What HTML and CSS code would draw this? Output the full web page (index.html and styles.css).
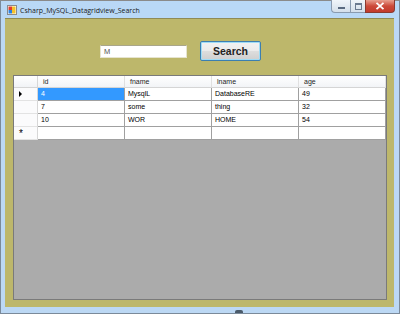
FILE: index.html
```html
<!DOCTYPE html>
<html>
<head>
<meta charset="utf-8">
<link rel="stylesheet" href="styles.css">
</head>
<body>
<div class="window">
  <div class="titlebar">
    <svg class="appicon" width="10" height="10" viewBox="0 0 10 10">
      <rect x="0.5" y="0.5" width="9" height="9" fill="#fff" stroke="#8a8a8a"/>
      <rect x="1.5" y="1.5" width="3.5" height="3.5" fill="#e03b2b"/>
      <rect x="5" y="1.5" width="3.5" height="3.5" fill="#f5c22a"/>
      <rect x="1.5" y="5" width="3.5" height="3.5" fill="#2a7fe0"/>
      <rect x="5" y="5" width="3.5" height="3.5" fill="#f5c22a"/>
    </svg>
    <span class="title">Csharp_MySQL_Datagridview_Search</span>
    <div class="controls">
      <div class="cbtn min"><span class="minglyph"></span></div>
      <div class="cbtn max"><span class="maxglyph"></span></div>
      <div class="cbtn close">
        <svg width="10" height="8" viewBox="0 0 10 8"><path d="M1.5 0.8 L8.5 7.2 M8.5 0.8 L1.5 7.2" stroke="#fff" stroke-width="1.8"/></svg>
      </div>
    </div>
  </div>
  <div class="client">
    <div class="toprow">
      <div class="textbox">M</div>
      <div class="button">Search</div>
    </div>
    <div class="grid">
      <div class="row head">
        <div class="rh"></div>
        <div class="c">id</div>
        <div class="c">fname</div>
        <div class="c">lname</div>
        <div class="c">age</div>
      </div>
      <div class="row">
        <div class="rh"><span class="arrow"></span></div>
        <div class="c sel">4</div>
        <div class="c">MysqlL</div>
        <div class="c">DatabaseRE</div>
        <div class="c">49</div>
      </div>
      <div class="row">
        <div class="rh"></div>
        <div class="c">7</div>
        <div class="c">some</div>
        <div class="c">thing</div>
        <div class="c">32</div>
      </div>
      <div class="row">
        <div class="rh"></div>
        <div class="c">10</div>
        <div class="c">WOR</div>
        <div class="c">HOME</div>
        <div class="c">54</div>
      </div>
      <div class="row">
        <div class="rh star">*</div>
        <div class="c"></div>
        <div class="c"></div>
        <div class="c"></div>
        <div class="c"></div>
      </div>
      <div class="empty"></div>
    </div>
  </div>
  <div class="grip"></div>
</div>
</body>
</html>
```
FILE: styles.css
```css
html, body {
  margin: 0;
  padding: 0;
  background: #c3d9ef;
}
.window {
  position: relative;
  width: 400px;
  height: 314px;
  box-sizing: border-box;
  background: #bcd8f4;
  border: 1px solid #7b8a9a;
  border-top-color: #8a8a8a;
  display: flex;
  flex-direction: column;
  font-family: "Liberation Sans", Arial, sans-serif;
}
.titlebar {
  height: 17px;
  display: flex;
  align-items: center;
  padding-left: 6px;
  position: relative;
  background: #b9d8f6;
}
.appicon {
  display: block;
  margin-right: 3px;
  margin-top: 1px;
}
.title {
  font-family: "Open Sans", "Noto Sans", sans-serif;
  font-size: 7px;
  color: #1a1a1a;
  margin-top: 1px;
}
.controls {
  position: absolute;
  right: 4px;
  top: -1px;
  display: flex;
  height: 14px;
}
.cbtn {
  height: 13px;
  box-sizing: border-box;
  border: 1px solid #8a9bb0;
  border-top: none;
  display: flex;
  align-items: center;
  justify-content: center;
}
.cbtn.min {
  width: 19px;
  background: linear-gradient(#f0f5fa, #d4dfea);
  border-radius: 0 0 0 4px;
  border-right: none;
}
.cbtn.max {
  width: 15px;
  background: linear-gradient(#f0f5fa, #d4dfea);
  border-right: none;
}
.cbtn.close {
  width: 30px;
  background: linear-gradient(#e8a090, #cc4a3a 50%, #c23a2c);
  border-color: #8a3a30;
  border-radius: 0 0 4px 0;
}
.minglyph {
  display: block;
  width: 7px;
  height: 2px;
  background: #5a6a80;
  margin-top: 4px;
}
.maxglyph {
  display: block;
  width: 5px;
  height: 4px;
  border: 1px solid #6a7a90;
  border-top-width: 2px;
}
.client {
  flex: 1;
  margin: 0 5px 6px 4px;
  background: #bdb76b;
  border-top: 1px solid #8f8a55;
  display: flex;
  flex-direction: column;
  padding: 0 7px 7px 8px;
}
.toprow {
  height: 56px;
  display: flex;
  align-items: flex-start;
  padding-top: 22px;
  box-sizing: border-box;
}
.textbox {
  margin-top: 4px;
  margin-left: 87px;
  width: 87px;
  height: 13px;
  box-sizing: border-box;
  background: #fff;
  border: 1px solid #e6e4cf;
  border-top-color: #a9a68a;
  font-size: 7.5px;
  line-height: 11px;
  padding-left: 3px;
  color: #555;
}
.button {
  margin-left: 13px;
  width: 61px;
  height: 20px;
  box-sizing: border-box;
  border: 1px solid #3c7fb1;
  border-radius: 2px;
  box-shadow: inset 0 0 0 1px #9fdcf6;
  background: linear-gradient(#f2f2f2 0%, #ebebeb 48%, #dddddd 52%, #cfcfcf 100%);
  font-size: 10.5px;
  font-weight: bold;
  color: #222;
  text-align: center;
  line-height: 18px;
}
.grid {
  flex: 1;
  display: flex;
  flex-direction: column;
  background: #ababab;
  border: 1px solid #7a7a7a;
  font-size: 7px;
}
.row {
  display: flex;
  height: 13px;
  background: #fff;
}
.row.head {
  height: 12px;
  background: linear-gradient(#ffffff, #f1f3f6);
}
.rh {
  width: 24px;
  box-sizing: border-box;
  border-right: 1px solid #d7d7d7;
  border-bottom: 1px solid #e3e3e3;
  background: #fbfbfc;
  position: relative;
}
.head .rh {
  background: linear-gradient(#ffffff, #f1f3f6);
  border-bottom: 1px solid #d5d5d5;
}
.c {
  width: 87px;
  box-sizing: border-box;
  border-right: 1px solid #a0a0a0;
  border-bottom: 1px solid #a0a0a0;
  padding-left: 3px;
  line-height: 12px;
  color: #000;
  white-space: nowrap;
  overflow: hidden;
}
.head .c {
  border-right: 1px solid #e0e0e0;
  border-bottom: 1px solid #d5d5d5;
  padding-left: 5px;
  line-height: 11px;
  color: #1e1e1e;
}
.c.sel {
  background: #3399ff;
  color: #fff;
}
.arrow {
  position: absolute;
  left: 5px;
  top: 3px;
  width: 0;
  height: 0;
  border-top: 3px solid transparent;
  border-bottom: 3px solid transparent;
  border-left: 3px solid #000;
}
.star {
  font-size: 10px;
  line-height: 14px;
  padding-left: 5px;
  color: #000;
}
.empty {
  flex: 1;
  background: #ababab;
}
.grip {
  position: absolute;
  left: 234px;
  bottom: 0;
  width: 8px;
  height: 3px;
  background: #4a5a6a;
  border-radius: 2px 2px 0 0;
}
```
